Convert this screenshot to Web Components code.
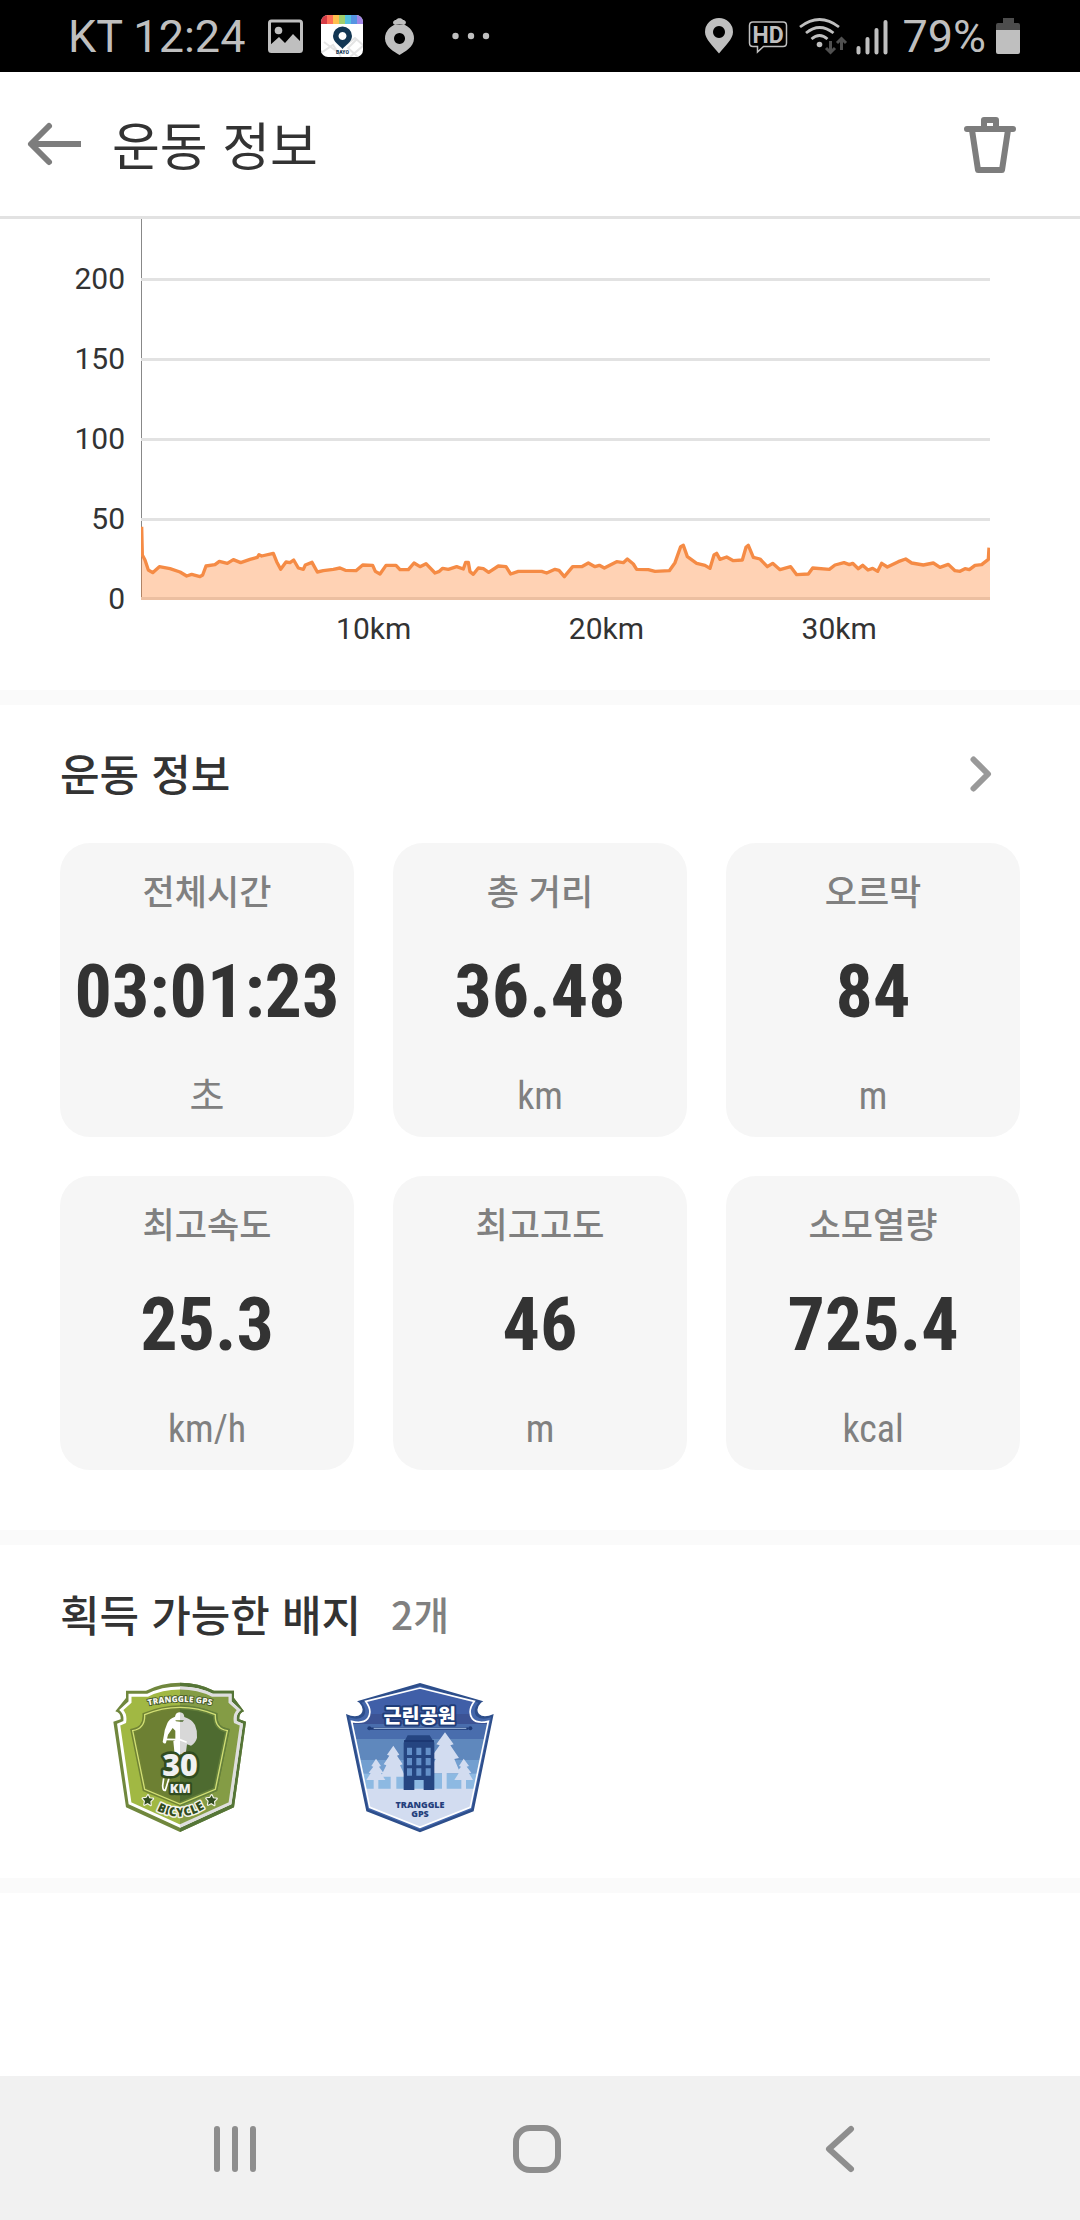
<!DOCTYPE html>
<html lang="ko">
<head>
<meta charset="utf-8">
<meta name="viewport" content="width=device-width, initial-scale=1">
<title>운동 정보</title>
<style>
  html, body { margin: 0; min-height: 100%; }
  body { background: #fff; color: #333; font-family: Roboto, "Noto Sans CJK KR", sans-serif; }
</style>
</head>
<body>
<workout-app></workout-app>

<template id="t-workout-app">
  <style>
    :host { display: flex; flex-direction: column; min-height: 100vh; }
    main { flex: 1; display: flex; flex-direction: column; }
    .cards { display: grid; grid-template-columns: repeat(3, 1fr); gap: 39px; padding: 0 60px 60px; }
    .badges { display: flex; padding: 0 60px 45px; margin-top: -4px; }
    .badges > * { width: 240px; }
  </style>
  <status-bar></status-bar>
  <title-bar>운동 정보</title-bar>
  <main>
    <speed-chart></speed-chart>
    <info-section more>
      <span slot="title">운동 정보</span>
      <div class="cards">
        <stat-card><span slot="label">전체시간</span>03:01:23<span slot="unit">초</span></stat-card>
        <stat-card><span slot="label">총 거리</span>36.48<span slot="unit">km</span></stat-card>
        <stat-card><span slot="label">오르막</span>84<span slot="unit">m</span></stat-card>
        <stat-card><span slot="label">최고속도</span>25.3<span slot="unit">km/h</span></stat-card>
        <stat-card><span slot="label">최고고도</span>46<span slot="unit">m</span></stat-card>
        <stat-card><span slot="label">소모열량</span>725.4<span slot="unit">kcal</span></stat-card>
      </div>
    </info-section>
    <info-section last>
      <span slot="title">획득 가능한 배지</span>
      <span slot="count">2개</span>
      <div class="badges">
        <bicycle-badge></bicycle-badge>
        <park-badge></park-badge>
      </div>
    </info-section>
  </main>
  <nav-bar></nav-bar>
</template>

<template id="t-status-bar">
  <style>
    :host { display: flex; justify-content: space-between; height: 72px; padding: 0 60px 0 68px; background: #000; color: #bfbfbf; font: 45px/74px Roboto, sans-serif; }
    div { display: flex; }
    .left { gap: 18px; }
    svg { height: 72px; display: block; }
  </style>
  <div class="left">
    <span>KT 12:24</span>
    <svg width="40" viewBox="265 0 40 72"><rect x="271.500" y="21" width="32" height="30.500" rx="2" fill="none" stroke="#bfbfbf" stroke-width="3"/><circle cx="280.500" cy="30.500" r="3.800" fill="#bfbfbf"/><path d="M271 46l10-9 6 6 8-9 9 9v9h-33z" fill="#bfbfbf"/></svg>
    <svg width="42" viewBox="323 0 42 72"><defs><clipPath id="c"><rect x="323" y="15" width="42" height="42" rx="7"/></clipPath></defs><g clip-path="url(#c)"><path fill="#fff" d="M323 15h42v42h-42z"/><path d="M323 53l12-8 8 12M352 57l14-12M349 44l8-6 8 7M326 42l12 9M358 40l-8 8 10 9" stroke="#e4e4e4" stroke-width="2" fill="none"/><path fill="#d63c46" d="M323 15h6v9h-6z"/><path fill="#ff7058" d="M329 15h6v9h-6z"/><path fill="#ffc04e" d="M335 15h6v9h-6z"/><path fill="#a0cf6c" d="M341 15h6v9h-6z"/><path fill="#54c1e0" d="M347 15h6v9h-6z"/><path fill="#5694e2" d="M353 15h6v9h-6z"/><path fill="#a286e6" d="M359 15h6v9h-6z"/><path fill="#123653" fill-rule="evenodd" d="M344.500 49c-3-4-9.500-7-9.500-13a9.500 9.500 0 0 1 19 0c0 6-6.500 9-9.500 13zM344.500 32a4 4 0 1 0 .01 0z"/></g><text x="344.500" y="54" text-anchor="middle" font-size="5" font-weight="900" fill="#123653">BAYO</text></svg>
    <svg width="36" viewBox="383 0 36 72"><path fill="#bfbfbf" fill-rule="evenodd" d="M401.500 55c-5-3-14.500-8-14.500-16.500a14.500 14.500 0 0 1 29 0c0 8.500-9.500 13.500-14.500 16.500zM401.500 33a5.500 5.500 0 1 0 .01 0zM396 24.500c-2-2-.5-4.500 2-4.500 1-2.500 6-2.500 7 0 2.500 0 4 2.500 2 4.500z"/></svg>
    <svg width="58" viewBox="437 0 58 72" fill="#bfbfbf"><circle cx="457.500" cy="36" r="3.200"/><circle cx="473" cy="36" r="3.200"/><circle cx="488" cy="36" r="3.200"/></svg>
  </div>
  <div>
    <svg width="44" viewBox="700 0 44 72"><path fill="#bfbfbf" fill-rule="evenodd" d="M720 53.500C714 46 706 39 706 32a14 14 0 0 1 28 0c0 7-8 14-14 21.500zM720 26a6 6 0 1 0 .01 0z"/></svg>
    <svg width="52" viewBox="744 0 52 72"><path d="M754 22h30q3.500 0 3.500 3.500v17.500q0 3.500-3.500 3.500h-19.500l-6 5.500v-5.500h-4.500q-3.500 0-3.500-3.500v-17.500q0-3.500 3.500-3.500z" fill="none" stroke="#bfbfbf" stroke-width="1.500"/><text x="769" y="42.500" text-anchor="middle" font-size="23" font-weight="700" fill="#bfbfbf">HD</text></svg>
    <svg width="54" viewBox="796 0 54 72"><g fill="none" stroke="#bfbfbf" stroke-width="2.800"><path d="M801 27q19.500-15 39 0M807 33q13.500-11 27.500 0M812.500 39q8-7 16 0"/></g><circle cx="820.500" cy="44.500" r="2.800" fill="#bfbfbf"/><path d="M831.500 41v11m-4.500-4l4.500 4.500 4.500-4.500M842.500 50v-11m-4.500 4l4.500-4.500 4.500 4.500" fill="none" stroke="#505050" stroke-width="3"/></svg>
    <svg width="53" viewBox="850 0 53 72"><path d="M859.500 48v4.500M868.500 39v13.500M877.500 30v22.500M886.500 22v30.500" stroke="#bfbfbf" stroke-width="4" stroke-linecap="round"/></svg>
    <span>79%</span>
    <svg width="34" viewBox="986 0 34 72"><path fill="#4d4d4d" d="M1003 18h11v5h4q2 0 2 2v6h-24v-6q0-2 2-2h5z"/><path fill="#bfbfbf" d="M996 30h24v22q0 2-2 2h-20q-2 0-2-2z"/></svg>
  </div>
</template>

<template id="t-title-bar">
  <style>
    :host { display: flex; align-items: center; height: 144px; padding: 0 60px 0 20px; border-bottom: 3px solid #e2e2e2; }
    button { border: 0; padding: 0; background: none; width: 64px; height: 72px; }
    svg { display: block; }
    h1 { flex: 1; margin: 0 0 0 28px; font: 400 52px/72px "Noto Sans CJK KR", sans-serif; }
  </style>
  <button aria-label="뒤로"><svg width="64" height="72" viewBox="20 108 64 72" fill="none" stroke="#7d7d7d" stroke-width="6"><path d="M31 144h50"/><path d="M49 126l-18 18 18 18" stroke-linecap="round" stroke-linejoin="round"/></svg></button>
  <h1><slot></slot></h1>
  <button aria-label="삭제"><svg width="64" height="72" viewBox="956 108 64 72" fill="none" stroke="#7d7d7d" stroke-width="6" stroke-linejoin="round" stroke-linecap="round"><path d="M967 129h46M984 129v-9h12v9"/><path d="M972 130l6 40h24l6-40"/></svg></button>
</template>

<template id="t-speed-chart">
  <style>
    :host { display: grid; grid-template-columns: 125px 1fr; column-gap: 16px; padding: 0 90px 32px 0; border-bottom: 15px solid #fafafa; font: 30px/80px Roboto, sans-serif; }
    .y { grid-row: 1 / span 2; display: flex; flex-direction: column; padding-top: 20px; height: 419px; text-align: right; }
    svg { display: block; width: 100%; height: 381px; }
    .x { display: grid; grid-template-columns: 500fr 1000fr 1000fr 1000fr 148fr; line-height: 58px; text-align: center; }
    .x span:first-child { grid-column: 2; }
  </style>
  <div class="y"><span>200</span><span>150</span><span>100</span><span>50</span><span>0</span></div>
  <svg viewBox="0 0 2547 1143" preserveAspectRatio="none">
    <path d="M1.500 0V1140" stroke="#888" stroke-width="3"/>
    <path d="M0 181.500H2547M0 421.500H2547M0 661.500H2547M0 901.500H2547M0 1138.500H2547" stroke="#e2e2e2" stroke-width="9"/>
    <g transform="translate(-63 843)"><path class="area" fill="#ff7a24" fill-opacity=".34"/><path class="line" fill="none" stroke="#f58b45" stroke-width="10" stroke-linejoin="round"/></g>
  </svg>
  <div class="x"><span>10km</span><span>20km</span><span>30km</span></div>
</template>

<template id="t-info-section">
  <style>
    :host { display: block; border-bottom: 15px solid #fafafa; }
    header { display: flex; align-items: center; gap: 30px; height: 138px; padding: 0 60px; }
    :host([last]) header { height: 140px; }
    h2 { margin: 0; padding-bottom: 4px; font: 500 43px/60px "Noto Sans CJK KR", sans-serif; }
    .count { flex: 1; padding-bottom: 4px; color: #808080; font: 500 39px/60px "Noto Sans CJK KR", sans-serif; }
    a { display: none; }
    :host([more]) a { display: block; padding: 0 20px; }
    svg { display: block; }
  </style>
  <header><h2><slot name="title"></slot></h2><span class="count"><slot name="count"></slot></span><a href="#detail" aria-label="더보기"><svg width="36" height="44" viewBox="964 752 36 44"><path d="M973.500 759.500l14.500 14.500-14.500 14.500" fill="none" stroke="#999" stroke-width="6" stroke-linecap="round" stroke-linejoin="round"/></svg></a></header>
  <slot></slot>
</template>

<template id="t-stat-card">
  <style>
    :host { display: flex; flex-direction: column; align-items: center; height: 294px; border-radius: 30px; background: #f6f6f6; white-space: nowrap; }
    .label { font: 500 35px/94px "Noto Sans CJK KR", sans-serif; color: #808080; }
    .value { font: 700 74px/110px "Roboto Condensed", Roboto, sans-serif; color: #333; }
    .unit { margin-top: 8px; font: 400 38px/82px "Roboto Condensed", "Noto Sans CJK KR", sans-serif; color: #808080; }
  </style>
  <span class="label"><slot name="label"></slot></span>
  <span class="value"><slot></slot></span>
  <span class="unit"><slot name="unit"></slot></span>
</template>

<template id="t-bicycle-badge">
  <style>
    :host { display: flex; justify-content: center; }
    svg { display: block; }
    text { font-family: "Open Sans", sans-serif; font-weight: 800; text-anchor: middle; }
  </style>
  <svg width="152" height="152" viewBox="12 33 456 456" role="img" aria-label="자전거 30km 배지">
    <defs>
      <clipPath id="right"><path d="M240 30h240v470H240z"/></clipPath>
      <path id="shape" d="M78 62H138Q184 38 240 38T342 62H402V84L432 124Q416 130 418 148L438 155 402 412 240 486 78 412 40 155 62 148Q64 130 46 124L78 84z"/>
      <path id="inner" d="M90 76H142Q186 54 240 54T338 76H390V96L416 120Q402 134 406 156L424 164 390 400 240 468 90 400 56 164 74 156Q78 134 64 120L90 96z"/>
      <path id="shield" d="M134 134Q186 112 240 112T346 134Q344 176 382 182L346 358 240 402 134 358 98 182Q136 176 134 134z"/>
      <path id="top" d="M130 110Q240 82 350 110"/>
      <path id="bottom" d="M150 408Q240 474 334 402"/>
    </defs>
    <use href="#shape" fill="#70873d"/><use href="#shape" fill="#557537" clip-path="url(#right)"/>
    <use href="#inner" fill="#a1b843" stroke="#fff" stroke-width="9"/>
    <g clip-path="url(#right)"><use href="#inner" fill="#849c45" stroke="#dedede" stroke-width="9"/></g>
    <use href="#shield" fill="#6d8033" stroke="#708334" stroke-width="13"/>
    <g clip-path="url(#right)"><use href="#shield" fill="#4e6b30" stroke="#64803c" stroke-width="13"/></g>
    <use href="#shield" fill="none" stroke="#d2df75" stroke-width="4"/>
    <path fill="#fff" d="M240 127q-13 0-15 13-18 6-24 22-8 18-9 32l-4 22q6 8 10 2l6-24 14-20 8 8v28l-6 4 4 40h16z"/><path fill="#d8d8d8" d="M240 127q12 1 13 14 24 8 32 24 8 18 6 38-4 16-18 24l-12-4-4 30h-17z"/>
    <path fill="#6d8033" d="M226 151h14v4l-12-1z"/><path fill="#4e6b30" d="M240 151h12l-4 4h-8z"/>
    <path d="M194 208l46 1 20 8M191 325l-3 22q0 16 8 14l13-43" fill="none" stroke="#fff" stroke-width="5"/><path d="M262 228l8 4" stroke="#4e6b30" stroke-width="6"/>
    <text x="240" y="319" font-size="91" stroke="#314c20" stroke-width="16" stroke-linejoin="round" paint-order="stroke" fill="#f0f0f0">30<tspan x="241" y="368" font-size="38" stroke-width="13">KM</tspan></text>
    <text font-size="25" fill="#f6f6ed" stroke="#3f5526" stroke-width="5" paint-order="stroke"><textPath href="#top" startOffset="50%">TRANGGLE GPS</textPath></text>
    <text font-size="37" fill="#314c20" stroke="#f3f3e9" stroke-width="9" paint-order="stroke" stroke-linejoin="round"><textPath href="#bottom" startOffset="50%">BICYCLE</textPath></text>
    <g fill="#314c20" stroke="#f3f3e9" stroke-width="7" stroke-linejoin="round" paint-order="stroke"><path id="star" d="M144 376l4 9 11 1-8 8 1 11-9-6-10 5 2-11-7-8 11-1z"/><use href="#star" x="191"/></g>
  </svg>
</template>

<template id="t-park-badge">
  <style>
    :host { display: flex; justify-content: center; }
    svg { display: block; }
    text { font-family: "Open Sans", sans-serif; font-weight: 800; text-anchor: middle; fill: #24407c; }
    .ko { font-family: "Noto Sans CJK KR", sans-serif; font-weight: 900; fill: #fff; }
  </style>
  <svg width="152" height="152" viewBox="27 33 456 456" role="img" aria-label="근린공원 배지">
    <defs><path id="p" d="M92 94L255 54 418 94Q396 124 412 146 426 162 460 154L406 412 255 472 104 412 50 154Q84 162 98 146 114 124 92 94z"/><clipPath id="pc"><use href="#p"/></clipPath></defs>
    <path fill="#2d4e8b" d="M66 94L255 39 445 94 438 98Q420 116 432 132 446 146 476 132L416 424 255 487 94 424 33 132Q64 146 78 132 90 116 73 98z"/>
    <path fill="#4366aa" d="M80 98L255 48 430 98Q412 120 424 138 438 152 468 142L410 418 255 479 100 418 42 142Q72 152 86 138 98 120 80 98z"/>
    <g clip-path="url(#pc)">
      <path fill="#405fa8" d="M30 40h450v92H30z"/><path fill="#3c5395" d="M30 132h450v30H30z"/><path fill="#496dad" d="M30 162h450v45H30z"/><path fill="#5f88bd" d="M30 207h450v63H30z"/><path fill="#739fd0" d="M30 270h450v40H30z"/><path fill="#8db9e2" d="M30 310h450v50H30z"/><path fill="#d2dcf0" d="M30 356h450v130H30z"/>
      <g fill="#d2dcf0"><path d="M330 187l26 36-10 3 26 38-14 3 18 43h-41v52h-14v-52h-41l22-43-15-3 27-38-10-3z"/><path d="M175 227l18 27-7 3 17 26-8 3 16 34h-27v40h-17v-40h-30l17-34-8-3 17-26-7-3zM123 266l15 22-6 2 13 18-7 2 13 20h-21v30h-14v-30h-22l13-20-6-2 14-18-6-2zM386 266l16 22-7 2 14 18-7 2 12 20h-21v30h-14v-30h-21l13-20-7-2 14-18-6-2z"/></g>
    </g>
    <use href="#p" fill="none" stroke="#fff" stroke-width="5"/>
    <path fill="#254581" d="M218 196h66l14 22v142h-32v-30h-28v30h-32V218z"/><path d="M207 213h90" stroke="#1b3770" stroke-width="5"/><path fill="#638fc8" d="M216 233h15v22h-15zm28 0h15v22h-15zm28 0h15v22h-15zM216 264h15v22h-15zm28 0h15v22h-15zm28 0h15v22h-15zM216 295h15v22h-15zm28 0h15v22h-15zm28 0h15v22h-15z"/>
    <path d="M108 176h292" stroke="#1f3b77" stroke-width="7"/><path d="M116 175h278" stroke="#a3bde1" stroke-width="3"/><circle cx="103" cy="175" r="6" fill="#1f3b77"/><circle cx="406" cy="175" r="6" fill="#1f3b77"/>
    <text class="ko" x="254" y="159" font-size="59" stroke="#203d79" stroke-width="12" stroke-linejoin="round" paint-order="stroke">근린공원</text>
    <text x="255" y="415" font-size="27">TRANGGLE</text><text x="255" y="441" font-size="27">GPS</text>
  </svg>
</template>

<template id="t-nav-bar">
  <style>
    :host { display: flex; height: 144px; padding: 0 90px 0 84px; background: #f1f1f1; }
    button { flex: 1; display: flex; align-items: center; justify-content: center; border: 0; padding: 2px 0 0; background: none; }
    svg { display: block; fill: none; stroke: #8e8e8e; stroke-width: 6; stroke-linecap: round; stroke-linejoin: round; }
  </style>
  <button aria-label="최근 앱"><svg width="48" height="48" viewBox="0 0 48 48"><path d="M6 4v40M24 4v40M42 4v40"/></svg></button>
  <button aria-label="홈"><svg width="48" height="48" viewBox="0 0 48 48"><rect x="3" y="3" width="42" height="42" rx="14"/></svg></button>
  <button aria-label="뒤로"><svg width="48" height="48" viewBox="0 0 48 48"><path d="M36 4L14 24l22 20"/></svg></button>
</template>

<script>
  class TemplateElement extends HTMLElement {
    constructor() {
      super();
      const tpl = document.getElementById('t-' + this.localName);
      this.attachShadow({ mode: 'open' }).append(tpl.content.cloneNode(true));
    }
  }
  for (const name of ['status-bar', 'title-bar', 'info-section', 'stat-card', 'bicycle-badge', 'park-badge', 'nav-bar'])
    customElements.define(name, class extends TemplateElement {});

  const SPEED = `65,80 67,165 75,180 85,210 98,218 118,200 150,206 180,216 200,228 215,223 240,230 248,225 258,198 285,194 298,184 322,190 340,179 362,188 390,178 412,172 417,164 425,168 460,160 470,185 482,208 498,186 510,188 521,180 535,204 550,208 556,195 576,187 592,216 610,212 640,208 660,204 676,211 708,212 728,195 758,196 766,214 780,222 798,196 828,196 840,209 865,209 882,189 900,200 918,191 945,219 958,214 968,205 985,208 1010,200 1030,207 1037,187 1045,187 1050,215 1060,223 1075,204 1090,206 1106,217 1135,198 1158,200 1172,222 1195,214 1265,214 1280,219 1305,208 1317,211 1333,230 1358,200 1385,200 1405,189 1425,200 1438,196 1453,204 1490,185 1510,188 1522,177 1540,192 1550,208 1585,209 1605,214 1648,212 1665,188 1682,140 1690,136 1702,170 1730,190 1755,196 1770,205 1782,165 1790,160 1800,178 1820,171 1840,182 1867,180 1878,142 1885,136 1900,172 1920,177 1942,200 1958,190 1980,209 2012,200 2030,224 2065,222 2078,204 2128,208 2145,195 2172,188 2188,194 2198,190 2215,206 2228,196 2244,210 2258,205 2273,214 2285,190 2302,201 2335,185 2357,177 2375,189 2410,195 2440,189 2460,202 2485,193 2505,212 2520,214 2535,206 2548,209 2565,196 2585,194 2605,178 2607,143`;
  customElements.define('speed-chart', class extends TemplateElement {
    connectedCallback() {
      const points = SPEED.split(' ').join('L');
      this.shadowRoot.querySelector('.line').setAttribute('d', 'M' + points);
      this.shadowRoot.querySelector('.area').setAttribute('d', 'M' + points + 'L2610,180V300H63V80Z');
    }
  });
  customElements.define('workout-app', class extends TemplateElement {});
</script>
</body>
</html>
